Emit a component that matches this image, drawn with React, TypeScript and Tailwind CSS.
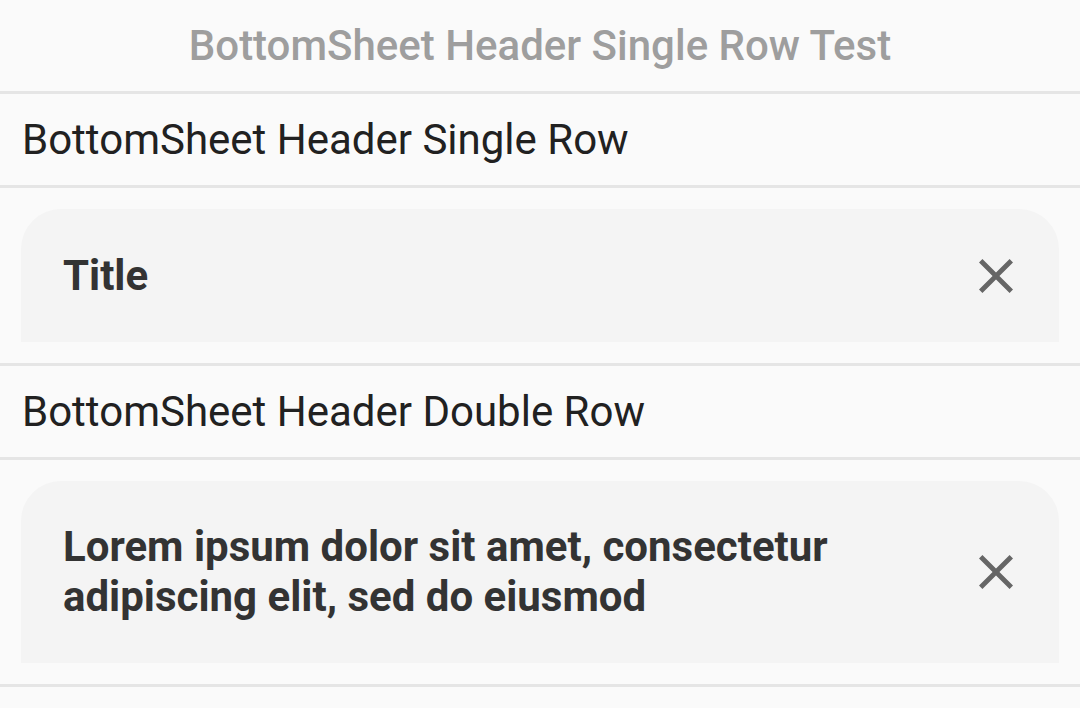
import { useState } from "react";

function CloseIcon() {
  return (
    <svg
      viewBox="5 5 14 14"
      className="h-[34px] w-[34px] fill-[#666666]"
      aria-hidden="true"
    >
      <path d="M19 6.41L17.59 5 12 10.59 6.41 5 5 6.41 10.59 12 5 17.59 6.41 19 12 13.41 17.59 19 19 17.59 13.41 12z" />
    </svg>
  );
}

function SheetHeader({ title }: { title: string }) {
  const [open, setOpen] = useState(true);

  return (
    <div className="p-[21px]">
      <div
        className={
          "flex min-h-[133px] items-center justify-between rounded-t-[40px] bg-[#f4f4f4] py-[41px] pl-[42px] pr-[46px] " +
          (open ? "" : "opacity-60")
        }
      >
        <h2 className="max-w-[800px] text-[42px] font-bold leading-[50px] text-[#333333]">
          {title}
        </h2>
        <button onClick={() => setOpen(!open)} className="shrink-0">
          <CloseIcon />
        </button>
      </div>
    </div>
  );
}

export default function App() {
  return (
    <div className="min-h-[708px] bg-[#fafafa] font-['Roboto',sans-serif]">
      <header className="flex h-[94px] items-center justify-center border-b-[3px] border-[#e5e5e5]">
        <h1 className="text-[42px] font-medium text-[#9e9e9e]">
          BottomSheet Header Single Row Test
        </h1>
      </header>

      <div className="flex h-[94px] items-center border-b-[3px] border-[#e5e5e5] px-[22px]">
        <p className="text-[42px] text-[#212121]">BottomSheet Header Single Row</p>
      </div>
      <div className="border-b-[3px] border-[#e5e5e5]">
        <SheetHeader title="Title" />
      </div>

      <div className="flex h-[94px] items-center border-b-[3px] border-[#e5e5e5] px-[22px]">
        <p className="text-[42px] text-[#212121]">BottomSheet Header Double Row</p>
      </div>
      <div className="border-b-[3px] border-[#e5e5e5]">
        <SheetHeader title="Lorem ipsum dolor sit amet, consectetur adipiscing elit, sed do eiusmod" />
      </div>
    </div>
  );
}
